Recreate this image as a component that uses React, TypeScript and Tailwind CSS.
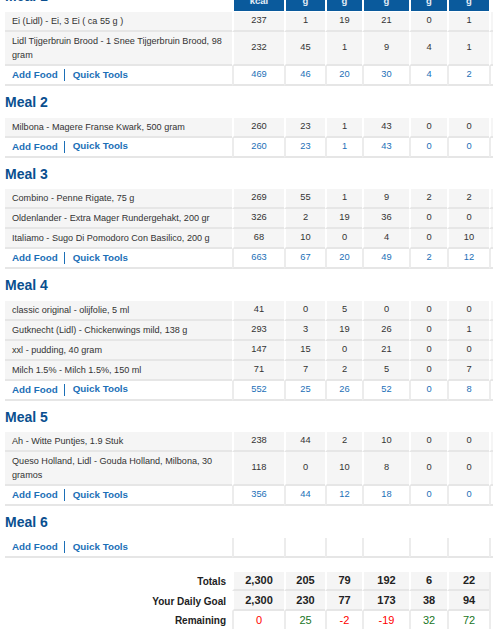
import React from 'react'

type Food = { name: string; vals: number[] }
type Meal = { name: string; foods: Food[]; totals: number[] | null }

const colW = ['w-[52px]', 'w-[41px]', 'w-[37px]', 'w-[47px]', 'w-[38px]', 'w-[42px]']
const headers = ['kcal', 'g', 'g', 'g', 'g', 'g']

const meals: Meal[] = [
  {
    name: 'Meal 1',
    foods: [
      { name: 'Ei (Lidl) - Ei, 3 Ei ( ca 55 g )', vals: [237, 1, 19, 21, 0, 1] },
      { name: 'Lidl Tijgerbruin Brood - 1 Snee Tijgerbruin Brood, 98 gram', vals: [232, 45, 1, 9, 4, 1] },
    ],
    totals: [469, 46, 20, 30, 4, 2],
  },
  {
    name: 'Meal 2',
    foods: [{ name: 'Milbona - Magere Franse Kwark, 500 gram', vals: [260, 23, 1, 43, 0, 0] }],
    totals: [260, 23, 1, 43, 0, 0],
  },
  {
    name: 'Meal 3',
    foods: [
      { name: 'Combino - Penne Rigate, 75 g', vals: [269, 55, 1, 9, 2, 2] },
      { name: 'Oldenlander - Extra Mager Rundergehakt, 200 gr', vals: [326, 2, 19, 36, 0, 0] },
      { name: 'Italiamo - Sugo Di Pomodoro Con Basilico, 200 g', vals: [68, 10, 0, 4, 0, 10] },
    ],
    totals: [663, 67, 20, 49, 2, 12],
  },
  {
    name: 'Meal 4',
    foods: [
      { name: 'classic original - olijfolie, 5 ml', vals: [41, 0, 5, 0, 0, 0] },
      { name: 'Gutknecht (Lidl) - Chickenwings mild, 138 g', vals: [293, 3, 19, 26, 0, 1] },
      { name: 'xxl - pudding, 40 gram', vals: [147, 15, 0, 21, 0, 0] },
      { name: 'Milch 1.5% - Milch 1.5%, 150 ml', vals: [71, 7, 2, 5, 0, 7] },
    ],
    totals: [552, 25, 26, 52, 0, 8],
  },
  {
    name: 'Meal 5',
    foods: [
      { name: 'Ah - Witte Puntjes, 1.9 Stuk', vals: [238, 44, 2, 10, 0, 0] },
      { name: 'Queso Holland, Lidl - Gouda Holland, Milbona, 30 gramos', vals: [118, 0, 10, 8, 0, 0] },
    ],
    totals: [356, 44, 12, 18, 0, 0],
  },
  { name: 'Meal 6', foods: [], totals: null },
]

const summary = [
  { label: 'Totals', vals: ['2,300', '205', '79', '192', '6', '22'] },
  { label: 'Your Daily Goal', vals: ['2,300', '230', '77', '173', '38', '94'] },
]
const remaining = [0, 25, -2, -19, 32, 72]

function MealBlock({ meal, first }: { meal: Meal; first: boolean }) {
  return (
    <div>
      <div className="flex h-[31.6px]">
        <div className="w-[227px] shrink-0 pt-[9px] text-[14px] leading-[14px] font-bold text-[#0a4f8f]">
          {meal.name}
        </div>
        {first &&
          headers.map((h, i) => (
            <div
              key={i}
              className={`${colW[i]} shrink-0 flex items-end justify-center border-l-2 border-b border-white bg-[#0a5a9c] pb-[5px] text-[9.5px] leading-[10px] font-bold text-[#e4edf7]`}
            >
              {h}
            </div>
          ))}
      </div>

      {meal.foods.map((f) => (
        <div key={f.name} className="flex">
          <div className="w-[227px] shrink-0 bg-[#f5f5f5] border-b-2 border-[#e6e6e6] pl-[7px] pr-[4px] py-[2px] text-[9.1px] leading-[14px]">
            {f.name}
          </div>
          {f.vals.map((v, i) => (
            <div
              key={i}
              className={`${colW[i]} shrink-0 flex items-center justify-center bg-[#f5f5f5] border-l-2 border-l-white border-b-2 border-b-[#e6e6e6] text-[9.3px]`}
            >
              {v}
            </div>
          ))}
          <div className="w-[24px] shrink-0 bg-[#f5f5f5] border-l-2 border-l-white border-b-2 border-b-[#e6e6e6]" />
        </div>
      ))}

      <div className="flex h-[20px]">
        <div className="w-[227px] shrink-0 flex items-center border-b-2 border-[#e6e6e6] pl-[7px] text-[9.8px] font-bold text-[#1b6fb7]">
          <span className="pr-[6px] border-r border-[#1b6fb7] leading-[12px]">Add Food</span>
          <span className="ml-[8px]">Quick Tools</span>
        </div>
        {colW.map((w, i) => (
          <div
            key={i}
            className={`${w} shrink-0 flex items-center justify-center border-l-2 border-l-[#ececec] border-b-2 border-b-[#e6e6e6] text-[9.3px] text-[#1b6fb7]`}
          >
            {meal.totals ? meal.totals[i] : ''}
          </div>
        ))}
        <div className="w-[24px] shrink-0 border-l-2 border-l-[#ececec] border-b-2 border-b-[#e6e6e6]" />
      </div>
    </div>
  )
}

export default function App() {
  return (
    <div className="h-[629px] w-[493px] overflow-hidden bg-white font-['Liberation_Sans',Arial,sans-serif] text-[#333]">
      <div className="mt-[-19.6px] w-[513px] pl-[5px]">
        {meals.map((m, i) => (
          <MealBlock key={m.name} meal={m} first={i === 0} />
        ))}

        <div className="h-[14px]" />

        {summary.map((row) => (
          <div key={row.label} className="flex h-[19.5px]">
            <div className="w-[227px] shrink-0 flex items-center justify-end pr-[6px] text-[10px] font-bold text-[#222]">
              {row.label}
            </div>
            {row.vals.map((v, i) => (
              <div
                key={i}
                className={`${colW[i]} shrink-0 flex items-center justify-center bg-[#f5f5f5] border-l-2 border-l-white border-b-2 border-b-[#e6e6e6] text-[11px] font-bold text-[#222]`}
              >
                {v}
              </div>
            ))}
            <div className="w-[24px] shrink-0 border-l-2 border-l-[#ececec]" />
          </div>
        ))}

        <div className="flex h-[19.5px]">
          <div className="w-[227px] shrink-0 flex items-center justify-end pr-[6px] text-[10px] font-bold text-[#222]">
            Remaining
          </div>
          {remaining.map((v, i) => (
            <div
              key={i}
              className={`${colW[i]} shrink-0 flex items-center justify-center border-l-2 border-l-[#ececec] text-[11px] ${
                v > 0 ? 'text-[#18761f]' : 'text-[#f00]'
              }`}
            >
              {v}
            </div>
          ))}
          <div className="w-[24px] shrink-0 border-l-2 border-l-[#ececec]" />
        </div>
      </div>
    </div>
  )
}
